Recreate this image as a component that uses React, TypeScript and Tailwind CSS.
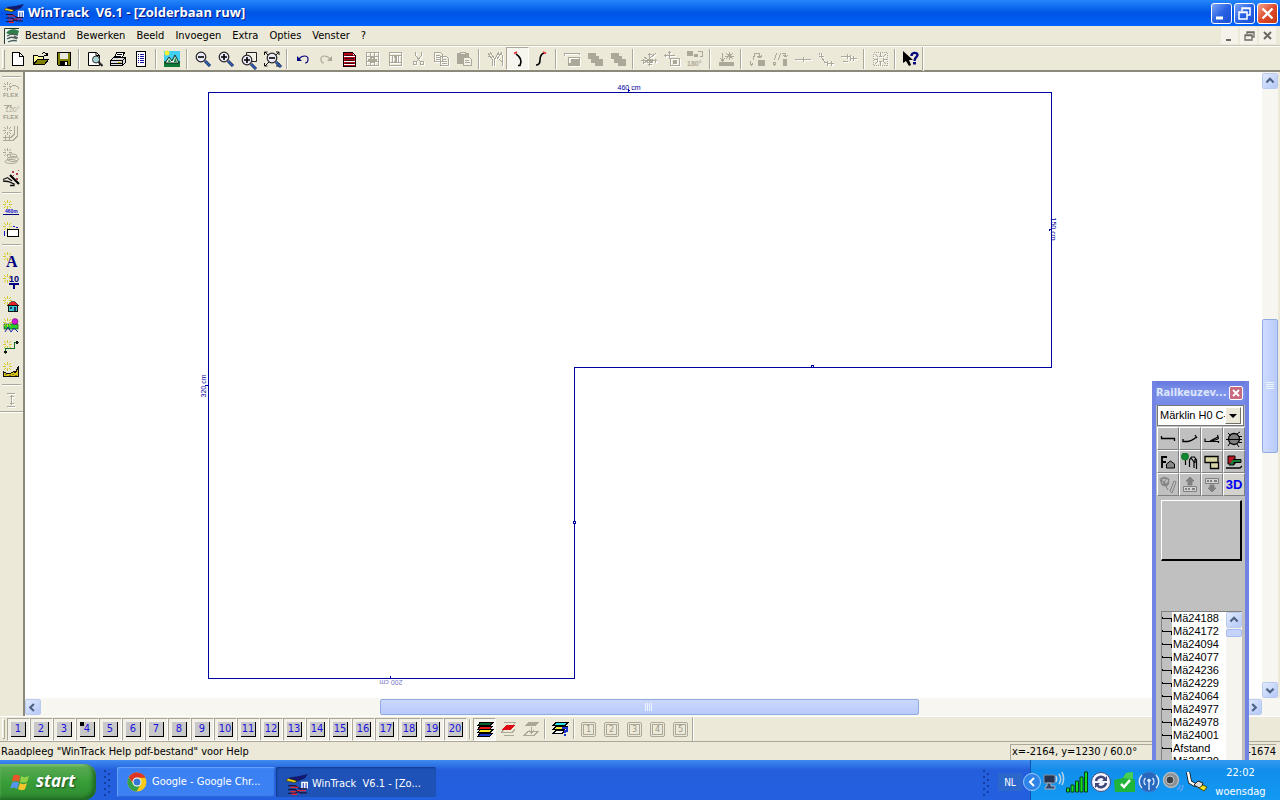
import React from "react";
import type { ReactNode } from "react";

const GRAY = "#aca899";

function Pic({ children, smooth = false }: { children: ReactNode; smooth?: boolean }) {
  return (
    <svg width="16" height="16" viewBox="0 0 16 16" fill="none" className="overflow-visible" shapeRendering={smooth ? "auto" : "crispEdges"} aria-hidden="true">
      {children}
    </svg>
  );
}

function Shade({ children }: { children: ReactNode }) {
  return (
    <Pic>
      <g stroke="#fff" fill="none" transform="translate(1 1)">{children}</g>
      <g stroke={GRAY} fill="none">{children}</g>
    </Pic>
  );
}

function Lens({ x = 6, y = 6, sign }: { x?: number; y?: number; sign: string }) {
  return (
    <>
      <path d={`M${x + 4} ${y + 4}l5 5`} stroke="#10204c" strokeWidth="3" />
      <path d={`M${x + 4} ${y + 4}l5 5`} stroke="#316ac5" strokeWidth="1.5" />
      <circle cx={x} cy={y} r="4.8" fill="#ece9f8" stroke="#222" strokeWidth="1.2" />
      <path d={sign} stroke="#000" strokeWidth="1.6" />
    </>
  );
}

const Spark = ({ c = "#d2ca30" }: { c?: string }) => (
  <path d="M4.5 0v3M4.5 6v3M0 4.5h3M6 4.500h3M1 1l2 2M6 6l2 2M8 1L6 3M3 6L1 8" stroke={c} strokeWidth="1" />
);

function WinTrackIcon({ size = 16 }: { size?: number }) {
  return (
    <svg width={size} height={size} viewBox="0 0 20 20" className="shrink-0" aria-hidden="true">
      <path d="M3 4l8-1 9-2-3 4-8 3.500-4-1z" fill="#111a70" />
      <path d="M0 7l2-2 8 2-2 1.800z" fill="#f3d40c" stroke="#111" strokeWidth=".5" />
      <path d="M14.500 14V8.500h5V14M17 14V8.500" stroke="#fff" strokeWidth="1.300" fill="#4a67c9" />
      <path d="M2 11.500h6l5 3h6M2 15h6l5 3h6M2 18.500h6l5-3" stroke="#1c1138" strokeWidth="1.200" fill="none" />
      <path d="M4 13h7M10 16h8M4 17h5M5 19.300h5" stroke="#e02538" strokeWidth="1.200" />
    </svg>
  );
}

const lensIcon = (sign: string, extra?: ReactNode, x = 6, y = 6) => <Pic smooth>{extra}<Lens x={x} y={y} sign={sign} /></Pic>;

type Tool = { label: string; icon: ReactNode; pressed?: boolean; off?: boolean };

const topGroups: Tool[][] = [
  [
    { label: "Nieuw", icon: <Pic><path d="M2.500 1.500h7l4 4v9h-11z" fill="#fff" stroke="#000" /><path d="M9.500 1.500v4h4" stroke="#000" /></Pic> },
    { label: "Openen", icon: <Pic><path d="M.5 13.500v-9h4l1 1h5v3" fill="#ffffa0" stroke="#000" /><path d="M.5 13.500l4-5h11l-4 5z" fill="#808000" stroke="#000" /><path d="M8.500 3.500c2-3 4-2 5.500 0m0-2v3h-3" stroke="#000" /></Pic> },
    { label: "Opslaan", icon: <Pic><path d="M1.500 1.500h13v13h-12l-1-1z" fill="#808000" stroke="#000" /><path d="M4 2h8v6H4z" fill="#e8e8dc" /><path d="M4 10h8v5H4z" fill="#000" /><path d="M9 11h2v3H9z" fill="#fff" /></Pic> },
  ],
  [
    { label: "Afdrukvoorbeeld", icon: <Pic smooth><path d="M1.500 1.500h8l3 3v10h-11z" fill="#fff" stroke="#000" /><path d="M9 1.500v3h3.500" stroke="#000" /><circle cx="9" cy="8.500" r="3.500" fill="#a9d4d4" stroke="#333" /><path d="M11.500 11l4 4" stroke="#222" strokeWidth="2" /></Pic> },
    { label: "Afdrukken", icon: <Pic><path d="M4.500 7l2-5.500h8L12 7" fill="#fff" stroke="#000" /><path d="M7 3.500h5M6 5.500h5" stroke="#000" /><path d="M.5 9.500l3-3h12v5l-3 3H.5z" fill="#ddd" stroke="#000" /><path d="M.5 9.500h12v5M12.500 9.500l3-3M1 12.500h11" stroke="#000" /><path d="M8 11h3" stroke="#c8b800" /></Pic> },
    { label: "Stuklijst", icon: <Pic><path d="M3.500.5h9v15h-9z" fill="#fff" stroke="#000" /><path d="M5 3.500h1M7 3.500h4M5 5.500h1M7 5.500h4M5 7.500h1M7 7.500h4M5 9.500h1M7 9.500h4M5 11.500h1M7 11.500h4" stroke="#14149c" /></Pic> },
  ],
  [
    { label: "3D-weergave", icon: <Pic smooth><path d="M0 0h16v16H0z" fill="#42cdf3" /><path d="M0 10h16v6H0z" fill="#0d7a38" /><path d="M1 12l4-6 3 4 3-6 4 8z" fill="#e8fff0" stroke="#102c20" /><path d="M4 11l1-3 2 3zM10 11l1-5 2 5z" fill="#168448" /><circle cx="3" cy="2" r="2.500" fill="#f7ef34" /></Pic> },
  ],
  [
    { label: "Uitzoomen", icon: lensIcon("M3 6h6") },
    { label: "Inzoomen", icon: lensIcon("M3 6h6M6 3v6") },
    { label: "Venster zoomen", icon: lensIcon("M3 9h6M6 6v6", <path d="M5.500 1.500h10v9h-10z" stroke="#222" fill="#f4f2e6" />, 6, 9) },
    { label: "Alles tonen", icon: lensIcon("M5 7h6", <path d="M.5 4V1h3M12 1h3v3M.5 12v3h3M15 12v3h-3M1 1l4 4M15 1l-4 4M1 15l4-4" stroke="#111" />, 8, 7) },
  ],
  [
    { label: "Ongedaan maken", icon: <Pic smooth><path d="M4 8C7 4 13 4 13 8c0 2-1 4-3 4" stroke="#080880" strokeWidth="1.200" /><path d="M2 5v5h5z" fill="#080880" /></Pic> },
    { label: "Opnieuw", off: true, icon: <Pic smooth><path d="M12 8C9 4 3 4 3 8c0 2 1 4 3 4" stroke={GRAY} strokeWidth="1.200" /><path d="M14 5v5H9z" fill={GRAY} /></Pic> },
    { label: "Eigenschappen", icon: <Pic><path d="M2 1h10l3 3v12H2z" fill="#b80818" /><path d="M12 1l3 3h-3z" fill="#fff" /><path d="M3 5.500h11M3 10.500h11M3 13.500h11" stroke="#fff" /><path d="M4 4h8M4 7.500h9M4 9.500h9M4 12.500h9" stroke="#301018" /><path d="M2.500 1.500h9l3 3v11h-12z" stroke="#160008" /></Pic> },
    { label: "Blok", off: true, icon: <Shade><path d="M2.500 1.500h12v13h-12zM2.500 5.500h12M2.500 10.500h12M6.500 1v14M10.500 1v14" /><path d="M4 8.500h9M7 6h3v5H7z" strokeWidth="2" /></Shade> },
    { label: "Kolom", off: true, icon: <Shade><path d="M2.500 1.500h12v13h-12zM2 4.500h12M2 11.500h12M5.500 4v8M11.500 4v8" /><path d="M7 5.500h3M8.500 5v6M7 10.500h3" strokeWidth="2" /></Shade> },
    { label: "Knippen", off: true, icon: <Shade><path d="M5.500 1v3l5 7M11.500 1v3l-5 7M3.500 10.500h3v3h-3zM10.500 10.500h3v3h-3z" /></Shade> },
    { label: "Kopiëren", off: true, icon: <Shade><path d="M1.500 1.500h6l2 2v7h-8zM7.500 5.500h6l2 2v7h-8zM3 4.500h4M3 6.500h4M3 8.500h4M9 8.500h4M9 10.500h5M9 12.500h5" /></Shade> },
    { label: "Plakken", off: true, icon: <Pic><path d="M1 2h12v11H1z" fill={GRAY} /><path d="M4.500 3.500h5v-2h-5z" fill="#eee" stroke={GRAY} /><path d="M7.500 6.500h6l2 2v6h-8z" fill="#f4f2e8" stroke={GRAY} /><path d="M9 9.500h4M9 11.500h5" stroke={GRAY} /></Pic> },
  ],
  [
    { label: "Verbinden", off: true, icon: <Shade><path d="M1 2l4 6v7M3 1l4 6v8M15 4v11M12 1L7 9M15 1l-5 7M1 5h3M10 3h5M12 8l3 3" /></Shade> },
    { label: "Bocht links", pressed: true, icon: <Pic smooth><path d="M6 3c3 2 5 5 5 8l-1 3.500H8" stroke="#000" strokeWidth="1.600" /><path d="M4 2.500l3-1.500" stroke="#e32936" strokeWidth="1.800" /></Pic> },
    { label: "Bocht rechts", icon: <Pic smooth><path d="M11 2C8 3 7 6 7 9s-1 5-4 5" stroke="#000" strokeWidth="1.600" /><path d="M10 1l3 1.500" stroke="#e32936" strokeWidth="1.800" /></Pic> },
  ],
  [
    { label: "Trein", off: true, icon: <Shade><path d="M.5 5V2.500h15v1M4.500 6.500h11v8h-11z" /><path d="M5 13h10M8 9h2v2H8zM12 9h2v2h-2z" strokeWidth="2" /></Shade> },
    { label: "Naar voren", off: true, icon: <Pic><path d="M1 2h8v3h3v3h4v7H8v-3H4V8H1z" fill={GRAY} /></Pic> },
    { label: "Naar achteren", off: true, icon: <Pic><path d="M1 2h8v3h3v3h4v7H8v-3H4V8H1z" fill={GRAY} /></Pic> },
  ],
  [
    { label: "Verplaatsen", off: true, icon: <Shade><path d="M0 9.500h16M8.500 2v13M6.500 3.500h4M6.500 13.500h4M2 7.500v4M14 7.500v4M2 13L15 2M3 6l9 6" /><path d="M6 8h5v3H6z" /></Shade> },
    { label: "Groep", off: true, icon: <Shade><path d="M0 4.500h11M5.500 0v8M1.500 3v3M4 1.500h3M6.500 7.500h9v7h-9z" /><path d="M9 10h4M9 12h4" strokeWidth="2" /></Shade> },
    { label: "180 graden draaien", off: true, icon: <Pic><path d="M0 0h6v5H0zM7 3h4v3H7z" fill={GRAY} /><path d="M10.500.5h5v5h-3" stroke={GRAY} /><text x="0" y="15" fontSize="7" fontFamily="Liberation Sans, sans-serif" fontWeight="700" fill={GRAY}>180°</text></Pic> },
  ],
  [
    { label: "Hoogte", off: true, icon: <Pic><path d="M1 11h15v4H1z" fill={GRAY} /><path d="M4.500 2v8M2 7l2.500 3L7 7M11.500 1v8M7 5h9M8 2l7 6M15 2L8 8" stroke={GRAY} /></Pic> },
  ],
  [
    { label: "Helling", off: true, icon: <Pic><path d="M2 15l2-3M4 9l2-7M5.500 2.500h5v3M8 5l3 2 2-3M1 14v-4" stroke={GRAY} /><path d="M9 9h7v6H9z" fill={GRAY} /></Pic> },
    { label: "Helling delen", off: true, icon: <Pic><path d="M2 15l2-3M2 9l3-7M6 9l3-7M9.500 2.500h4v3M11 4l3 2 2-2M1 14v-3h3" stroke={GRAY} /><path d="M11 8h4v7h-4z" fill={GRAY} /></Pic> },
    { label: "Splitsen", off: true, icon: <Shade><path d="M0 8.500h16M8.500 6v5" /></Shade> },
    { label: "Verbinding", off: true, icon: <Shade><path d="M3.500 2v4l3 5 4 1.500h5M1 5.500h5M1.500 2v2M9.500 10v5M13.500 10v5" /></Shade> },
    { label: "Sluiten", off: true, icon: <Shade><path d="M0 5.500h9M6.500 3v5M9.500 4v6M9 7.500h7M2 10.500h5M12.500 5v5" /></Shade> },
  ],
  [
    { label: "Centreren", off: true, icon: <Shade><path d="M1.500 1.500h14v13h-14z" strokeDasharray="1 1" /><path d="M8.500 2v4M8.500 10v4M2 8.500h4M11 8.500h4M7 5.500h3M7 10.500h3M5.500 7v3M11.500 7v3M3 3l3 3M14 3l-3 3M3 13l3-3M14 13l-3-3" /></Shade> },
  ],
  [
    { label: "Help", icon: <Pic smooth><path d="M0 0v12l3-2 3 5 2-1-2-5h4z" fill="#000" /><path d="M8.500 5c0-4 6-4 6-1 0 2-3 2-3 6" stroke="#080880" strokeWidth="2.400" /><path d="M10 11h3v2.500h-3z" fill="#080880" /></Pic> },
  ],
];

const sideGroups: Tool[][] = [
  [
    { label: "Flexrail", off: true, icon: <Pic><Spark c={GRAY} /><path d="M7 6c3-4 5-3 8-1v2" stroke={GRAY} /><text x="0" y="15" fontSize="6" fontFamily="Liberation Sans, sans-serif" fontWeight="700" fill="#a09d8e">FLEX</text></Pic> },
    { label: "Flexrail 120 graden", off: true, icon: <Pic><path d="M1 1.500h5L3 5M9 1.500H7v2h2" stroke={GRAY} /><text x="2" y="8" fontSize="7" fontFamily="Liberation Sans, sans-serif" fill={GRAY}>120°</text><text x="0" y="15" fontSize="6" fontFamily="Liberation Sans, sans-serif" fontWeight="700" fill="#a09d8e">FLEX</text></Pic> },
    { label: "Parallelspoor", off: true, icon: <Pic><Spark c={GRAY} /><path d="M11.500 0v8l-3 3H0M14.500 0v10l-4 4H0M2.500 9v6M6.500 9v6" stroke={GRAY} /></Pic> },
    { label: "Spiraal", off: true, icon: <Pic smooth><Spark c={GRAY} /><ellipse cx="9" cy="8" rx="5" ry="2" stroke={GRAY} /><ellipse cx="10" cy="11" rx="5.500" ry="2.500" stroke={GRAY} /><ellipse cx="8" cy="13.500" rx="6" ry="2" stroke={GRAY} /></Pic> },
    { label: "Wizard", icon: <Pic smooth><path d="M7 5l9 9" stroke="#000" strokeWidth="2.200" /><path d="M0 9.500l5-2M0 11l5 .5 6 2.500v1.500H7M5 8l4 3" stroke="#111" strokeWidth="1.300" /><path d="M9 1h2v2H9zM13 3h2v2h-2zM13 8h2v2h-2zM10 5h1v1h-1zM15 0h1v1h-1z" fill="#b0405a" /></Pic> },
  ],
  [
    { label: "Maatlijn", icon: <Pic><Spark /><path d="M0 14.500h16" stroke="#000080" /><text x="2" y="13" fontSize="5" fontFamily="Liberation Sans, sans-serif" fontWeight="700" fill="#1010d0">460m</text></Pic> },
    { label: "Rechthoek", icon: <Pic><Spark /><path d="M4.500 7.500h11v7h-11z" fill="#fff" stroke="#000" /><path d="M1.500 9v5M10 4.500h2M13 5.500h2" stroke="#1010d0" /></Pic> },
  ],
  [
    { label: "Tekst", icon: <Pic><Spark /><text x="3" y="15" fontSize="16" fontFamily="Liberation Serif, serif" fontWeight="700" fill="#000080">A</text></Pic> },
    { label: "Hoogtepunt", icon: <Pic><Spark /><text x="6" y="8" fontSize="9" fontFamily="Liberation Sans, sans-serif" fontWeight="700" fill="#000080">10</text><path d="M6 10h10M11 10v5" stroke="#000080" strokeWidth="2" /></Pic> },
    { label: "Huis", icon: <Pic><Spark /><path d="M4 9.500l5-4h3l4 4z" fill="#e82128" stroke="#222" strokeWidth=".7" /><path d="M5.500 9.500h9v6h-9z" fill="#35c9cd" stroke="#111" /><path d="M7 11h2v2H7zM11 11h2v4h-2z" fill="#17366b" /></Pic> },
    { label: "Landschap", icon: <Pic smooth><path d="M1 6h14v5H1z" fill="#2bcc29" stroke="#073b0a" strokeWidth=".6" /><Spark /><circle cx="12" cy="3.500" r="3" fill="#d214d6" stroke="#551255" strokeWidth=".5" /><path d="M2 14l3-5 3 5 3-4 4 4" stroke="#1724aa" /></Pic> },
    { label: "Profiel", icon: <Pic><Spark /><path d="M2.500 14V8.500h9v-6h4" stroke="#107028" /><path d="M1 11h3v2H1zM13 1h2v3h-2z" fill="#111" /></Pic> },
    { label: "Terrein", icon: <Pic><Spark /><path d="M.5 14.500v-5l3 2h4l3-2 2 1 3-6v10z" fill="#ddc319" stroke="#111" /><path d="M2 12.500h2M6 13.500h2M9 12.500h2M12 13.500h2" stroke="#7d7811" /></Pic> },
  ],
  [{ label: "Hoogte", off: true, icon: <Shade><path d="M4 1.500h8M4 14.500h8M8.500 3v10M6.500 4.500h4M6.500 11.500h4" /></Shade> }],
];

const layerGroups: Tool[][] = [
  [
    { label: "Alle lagen", pressed: true, icon: <Pic><path d="M1 15l2-3h13l-3 3z" fill="#2035c8" stroke="#000" /><path d="M1 11.500l2-3h13l-3 3z" fill="#f8e928" stroke="#000" /><path d="M1 8l2-3h13l-3 3z" fill="#e91818" stroke="#000" /><path d="M1 4.500l2-3h13l-3 3z" fill="#07602c" stroke="#000" /></Pic> },
    { label: "Actieve laag", icon: <Pic><path d="M4 1.500h11l-2 3M1 11.500l3-3M1 11.500h11l3-3M4 14.500h10" stroke={GRAY} /><path d="M1 9l5-5h9l-5 5z" fill="#e00b12" /></Pic> },
    { label: "Laag omlaag", off: true, icon: <Pic><path d="M1 14.500l4-4h10l-4 4z" stroke={GRAY} /><path d="M1 5l4-4h11l-4 4z" fill={GRAY} /><path d="M8.500 6v6M6 9l2.500 3L11 9" stroke={GRAY} /></Pic> },
  ],
  [{ label: "Lagen instellen", icon: <Pic><path d="M1 12.500l3-3h9l-3 3z" fill="#fff" stroke="#000" /><path d="M1 8.500l3-3h11l-3 3z" fill="#f8ef36" stroke="#000" /><path d="M1 4.500l3-3h12l-3 3z" fill="#2ae5e5" stroke="#000" /><path d="M10 7h5v3h-2v2M12 14h2" stroke="#1531ce" strokeWidth="2" /></Pic> }],
];

function ToolButton({ tool, small = false }: { tool: Tool; small?: boolean }) {
  const look = tool.pressed ? "border-[#aca899] border-r-white border-b-white bg-[#f6f5ee]" : "border-transparent";
  return (
    <button type="button" aria-label={tool.label} disabled={tool.off} className={`grid shrink-0 place-items-center border ${small ? "h-[22px] w-[22px]" : "h-[23px] w-[23px]"} ${look}`}>
      {tool.icon}
    </button>
  );
}

const Divider = () => <span className="mx-[3px] h-5 w-[2px] shrink-0 border-l border-r border-l-[#aca899] border-r-white" />;
const Grip = () => <span className="mr-px ml-[2px] h-5 w-[3px] shrink-0 border border-white border-r-[#aca899] border-b-[#aca899]" />;

function Chevron({ dir }: { dir: "up" | "down" | "left" | "right" }) {
  const d = { up: "M1 6l4-4 4 4", down: "M1 3l4 4 4-4", left: "M6 1L2 5l4 4", right: "M3 1l4 4-4 4" }[dir];
  return <svg width="10" height="9" viewBox="0 0 10 10" aria-hidden="true"><path d={d} fill="none" stroke="#4d6185" strokeWidth="2.400" /></svg>;
}

function ScrollButton({ dir }: { dir: "up" | "down" | "left" | "right" }) {
  return (
    <button type="button" aria-label={`Schuif ${dir}`} className="grid h-4 w-4 shrink-0 place-items-center rounded-xs border border-white bg-linear-to-br from-[#e1eafe] to-[#b4c8f6] outline outline-[#b9cbef] -outline-offset-1">
      <Chevron dir={dir} />
    </button>
  );
}

function TitleButton({ label, children, red = false }: { label: string; children: ReactNode; red?: boolean }) {
  return (
    <button type="button" aria-label={label} className={`grid h-[21px] w-[21px] place-items-center rounded-[3px] border border-white bg-linear-to-br ${red ? "from-[#f0a08a] via-[#e0492a] to-[#c23a16]" : "from-[#7da5f5] via-[#2a62e4] to-[#1c4fd6]"}`}>
      <svg width="15" height="15" viewBox="0 0 15 15" fill="none" stroke="#fff" aria-hidden="true">{children}</svg>
    </button>
  );
}

function Plan() {
  return (
    <svg width="1237" height="626" viewBox="25 72 1237 626" className="block" role="img" aria-label="Plattegrond">
      <g shapeRendering="crispEdges" stroke="#0000a0" fill="none">
        <path d="M208.500 92.500H1051.500V367.500H574.500V678.500H208.500Z" />
        <path d="M811.500 365.500h2v2h-2zM573.500 521.500h2v2h-2z" fill="#fff" />
        <path d="M628 90.500h2M628.500 89v3M1049.500 229v2M1049 229.500h3M205 385.500h3M390.500 676v3" />
      </g>
      <g fontSize="7" fontFamily="Liberation Sans, sans-serif" fill="#0000a0" textAnchor="middle">
        <text x="629" y="90">460 cm</text>
        <text transform="translate(1051 229) rotate(90)">150 cm</text>
        <text transform="translate(206 386) rotate(-90)">320 cm</text>
        <text transform="translate(391 680) rotate(180)" fill="#7777c4">200 cm</text>
      </g>
    </svg>
  );
}

const P = ({ children }: { children: ReactNode }) => <svg width="18" height="18" viewBox="0 0 18 18" fill="none" stroke="#000" aria-hidden="true">{children}</svg>;

const railTools: { label: string; icon: ReactNode }[] = [
  { label: "Rechte rail", icon: <P><path d="M2.500 6v2.500h13V11" strokeWidth="1.300" /></P> },
  { label: "Gebogen rail", icon: <P><path d="M2 9v2.500h5c4-1 5-2 8-4M14 5l2 3" strokeWidth="1.300" /></P> },
  { label: "Wissel", icon: <P><path d="M2 8.500v3h13.500V13M7 11l8-4M9 11l6-2M14.500 5l1 4" strokeWidth="1.200" /></P> },
  { label: "Draaischijf", icon: <P><circle cx="9" cy="9" r="5.500" fill="#808080" strokeWidth="1.300" /><path d="M1 9.500h16M3 3l3 3M12 4l3-2M14 6.500h3M14 12.500h3M12 14l2 3M5 13l-2 3" /></P> },
  { label: "Gebouwen", icon: <P><path d="M3 15V4h5M3 9h4" strokeWidth="1.800" /><path d="M7.500 15v-4l4-3 4 3v4z" fill="#888" /></P> },
  { label: "Landschap", icon: <P><path d="M4.500 7v5M8.500 14V7l2-3h3l2 3v9M10 5l3 4v6M14 6v4" strokeWidth="1.200" /><circle cx="4" cy="3.500" r="3.500" fill="#138631" stroke="#0a7425" /></P> },
  { label: "Vlakken", icon: <P><path d="M2 3.500h13v6H2zM7.500 9.500h8v6h-8z" fill="#d9d5a5" strokeWidth="1.300" /></P> },
  { label: "Treinen", icon: <P><path d="M3 3h7v8H3z" fill="#b51622" /><path d="M8 6.500h8v3H9v2.500H4" fill="#177b35" /><path d="M1 15h14l2-2" strokeWidth="1.300" /></P> },
  { label: "Bewerken", icon: <P><g stroke="#808080"><path d="M1 3l4-2 5 2-2 6-5-1zM4 5l5 9M2 4l6 4M7 3L4 9M15 5l-4 10 2 2 4-11z" /><circle cx="6" cy="6" r="4" /></g></P> },
  { label: "Omhoog", icon: <P><g stroke="#808080"><path d="M9 1l4 4h-2v4H7V5H5z" fill="#808080" /><path d="M2.500 10.500h13v5h-13z" fill="#d2d2d2" /><path d="M4 13h2M7 13h2M11 13h3" strokeWidth="2" /></g></P> },
  { label: "Omlaag", icon: <P><g stroke="#808080"><path d="M2.500 2.500h13v5h-13z" fill="#d2d2d2" /><path d="M9 16l4-4h-2V9H7v3H5z" fill="#808080" /><path d="M4 5h2M7 5h2M11 5h3" strokeWidth="2" /></g></P> },
];

const rails = ["Mä24188", "Mä24172", "Mä24094", "Mä24077", "Mä24236", "Mä24229", "Mä24064", "Mä24977", "Mä24978", "Mä24001", "Afstand", "Mä24530"];

function RailPanel() {
  return (
    <section className="absolute top-[381px] right-[31px] bottom-10 flex w-[97px] flex-col overflow-hidden border-x-4 border-[#7284e3] bg-[#c0c0c0] pl-px font-['Liberation_Sans',sans-serif] text-[11px]">
      <header className="-mr-1 -ml-[5px] flex h-6 shrink-0 items-center justify-between bg-linear-to-b from-[#6678dc] via-[#8095ec] to-[#7488e6] pr-1.5 pl-1">
        <h2 className="font-['DejaVu_Sans_Condensed','DejaVu_Sans',sans-serif] text-[11px] font-bold text-[#dce5fb]">Railkeuzev...</h2>
        <button type="button" aria-label="Sluiten" className="grid h-3.5 w-3.5 place-items-center rounded-xs border border-white bg-[#c86b80]">
          <svg width="8" height="8" viewBox="0 0 8 8" aria-hidden="true"><path d="M1 1l6 6M7 1L1 7" stroke="#fff" strokeWidth="1.800" /></svg>
        </button>
      </header>
      <div className="relative h-[21px] shrink-0">
        <select aria-label="Railsysteem" className="h-full w-[87px] appearance-none border border-[#777] bg-white pr-4 pl-0.5 text-[11px] text-black">
          <option>Märklin H0 C-</option>
        </select>
        <span className="pointer-events-none absolute top-0.5 right-1 grid h-[17px] w-4 place-items-center border border-white border-r-[#716f64] border-b-[#716f64] bg-[#ece9d8]">
          <svg width="8" height="4" viewBox="0 0 8 4" aria-hidden="true"><path d="M0 0h8L4 4z" /></svg>
        </span>
      </div>
      <div className="grid w-[88px] shrink-0 grid-cols-4 pt-px">
        {railTools.map((t) => (
          <button key={t.label} type="button" aria-label={t.label} className="grid h-[23px] place-items-center border border-white border-r-[#808080] border-b-[#808080]">{t.icon}</button>
        ))}
        <button type="button" className="grid h-[23px] place-items-center border border-white border-r-[#808080] border-b-[#808080] bg-[#d4d2cc] font-['Liberation_Sans',sans-serif] text-[13px] font-bold text-[#0000f0]">3D</button>
      </div>
      <div className="mt-1 ml-[4px] h-[61px] w-[81px] shrink-0 border-t border-r-2 border-b-2 border-l border-t-white border-r-black border-b-black border-l-white" />
      <div className="mt-[50px] ml-1 flex min-h-0 w-[81px] flex-1 border-t border-l border-[#808080] bg-white">
        <ul className="min-w-0 flex-1">
          {rails.map((r) => (
            <li key={r} className="flex h-[13px] items-center gap-px leading-[13px]">
              <svg width="10" height="13" viewBox="0 0 10 13" className="shrink-0 bg-[#c0c0c0]" shapeRendering="crispEdges" aria-hidden="true"><path d="M.5 5v1.500h9V10" fill="none" stroke="#000" /></svg>
              <span className="whitespace-nowrap">{r}</span>
            </li>
          ))}
        </ul>
        <div className="flex w-4 shrink-0 flex-col bg-[#f5f4ee]">
          <ScrollButton dir="up" />
          <span className="mt-px h-2 w-4 rounded-xs border border-[#a6bcf0] bg-[#c5d3fb]" />
        </div>
      </div>
    </section>
  );
}

function ChromeIcon() {
  return (
    <svg width="20" height="20" viewBox="0 0 20 20" className="shrink-0" aria-hidden="true">
      <circle cx="10" cy="10" r="9.500" fill="#f6c91a" />
      <path d="M1.800 5.200A9.500 9.500 0 0 1 18.500 5.700H10a4.300 4.300 0 0 0-4.200 5.300z" fill="#dc3526" />
      <path d="M1.800 5.200A9.500 9.500 0 0 0 9.500 19.500l4.200-7.200a4.400 4.400 0 0 1-7.500 0z" fill="#35a04a" />
      <circle cx="10" cy="10" r="4.500" fill="#fff" /><circle cx="10" cy="10" r="3.500" fill="#3578d4" />
    </svg>
  );
}

const T = ({ children }: { children: ReactNode }) => <svg width="24" height="24" viewBox="0 0 24 24" fill="none" className="shrink-0" aria-hidden="true">{children}</svg>;

function TrayIcons() {
  return (
    <div className="flex items-center">
      <T><path d="M3 5h11v8H3z" fill="#27334e" stroke="#8292ae" /><path d="M6 13h4v3h4v3H4v-2l2-1z" fill="#36466b" stroke="#a6b7c8" /><path d="M15 6c1 2 1 4 0 6M18 4c2 3 2 7 0 10M21 2c2 4 2 9 0 13" stroke="#b8d2e7" strokeWidth="1.500" /></T>
      <T><path d="M1.500 18h3v4h-3zM6 15h3v7H6zM10.500 11h3v11h-3zM15 7h3v15h-3zM19.500 2h3v20h-3z" fill="#14e11c" stroke="#073d19" /></T>
      <T><circle cx="12" cy="12" r="9.500" fill="#f2f4ff" stroke="#454d7b" /><path d="M7 11a5 5 0 0 1 9-2M17 13a5 5 0 0 1-9 2" stroke="#404776" strokeWidth="2.500" /><path d="M18 6v5h-5zM6 18v-5h5z" fill="#404776" /></T>
      <T><path d="M1 10l9-2 3-5 7-1v7l2 1v12H2z" fill="#21b43b" /><path d="M10 8l3-5 7-1v7z" fill="#48cf54" /><path d="M8 14l3 3 6-7" stroke="#fff" strokeWidth="2.500" /></T>
      <T><circle cx="12" cy="12" r="10" fill="#2868bc" stroke="#3b79d0" /><path d="M12 11v9M8.500 8a5 5 0 0 0 0 7M15.500 8a5 5 0 0 1 0 7M5 5a9 9 0 0 0 0 13M19 5a9 9 0 0 1 0 13" stroke="#dcecff" strokeWidth="1.400" /><circle cx="12" cy="10.500" r="1.800" fill="#dcecff" /></T>
      <T><circle cx="10" cy="10" r="7.500" fill="#8a9094" stroke="#b5babd" strokeWidth="1.500" /><circle cx="9" cy="10" r="4" fill="#3b4248" stroke="#c3c8ca" /><path d="M16 19c2 0 3-2 3-4M19 21c2-1 3-3 3-6" stroke="#5ba4fb" strokeWidth="1.500" /></T>
      <T><path d="M3 2l2 10 5 3h6" stroke="#111" strokeWidth="4" /><path d="M3 2l2 10 5 3h6" stroke="#fff" strokeWidth="2.400" /><path d="M9 15l4-4 5 2-2 6z" fill="#ddd" stroke="#222" /><path d="M14 18l4-3 4 2-3 4z" fill="#f2e321" stroke="#514a05" /></T>
    </div>
  );
}

const Dots = () => (
  <svg width="8" height="28" viewBox="0 0 8 28" aria-hidden="true"><path d="M2 2v26M6 5v22" stroke="#153f9e" strokeWidth="2" strokeDasharray="2 4" /></svg>
);

export default function App() {
  return (
    <div className="relative flex h-screen min-h-[600px] flex-col overflow-hidden bg-[#ece9d8] font-['DejaVu_Sans_Condensed','DejaVu_Sans',sans-serif] text-[11px] text-black">
      <header className="flex h-[26px] shrink-0 items-center bg-linear-to-b from-[#2585fa] via-[#0054e6] to-[#0064fc] px-1">
        <WinTrackIcon size={20} />
        <h1 className="ml-1 flex-1 font-['Open_Sans',sans-serif] text-[13px] font-bold whitespace-pre text-white [text-shadow:1px_1px_#0a1883]">WinTrack  V6.1 - [Zolderbaan ruw]</h1>
        <div className="-mr-0.5 flex gap-0.5">
          <TitleButton label="Minimaliseren"><path d="M2 12h7" strokeWidth="3" /></TitleButton>
          <TitleButton label="Verkleinen"><path d="M5 5V2h8v7h-3M2 6h8v7H2zM5 2.500h8M2 6.500h8" strokeWidth="1.500" /></TitleButton>
          <TitleButton label="Sluiten" red><path d="M2.500 2.500l10 10M12.500 2.500l-10 10" strokeWidth="2.400" /></TitleButton>
        </div>
      </header>

      <nav className="flex h-5 shrink-0 items-center border-b border-[#c9c5b2] pr-1 pl-1">
        <svg width="16" height="16" viewBox="0 0 16 16" aria-hidden="true"><path d="M0 0h16v16H0z" fill="#eef3ee" /><path d="M2 5c3-4 8-5 13-2l-1 3-7 1z" fill="#2d7e4b" /><path d="M3 8l5-2 6 1M3 11c4-3 7-2 10 0M4 14c4-2 6-2 9-1M10 8l4 2" stroke="#4c5a54" strokeWidth="1.300" fill="none" /><path d="M.5 16V.5H15" fill="none" stroke="#243a31" /></svg>
        <div className="flex flex-1 gap-[11px] pt-px pl-[5px]">
          {["Bestand", "Bewerken", "Beeld", "Invoegen", "Extra", "Opties", "Venster", "?"].map((m) => <button key={m} type="button">{m}</button>)}
        </div>
        <div className="flex gap-0.5 text-[#6c6a60]">
          {["M2 10h5", "M4 4V2h7v5H9M2 5h7v5H2zM4 2.500h7M2 5.500h7", "M2 2l7 7M9 2L2 9"].map((d, i) => (
            <button key={d} type="button" aria-label={["Venster minimaliseren", "Venster herstellen", "Venster sluiten"][i]} className="grid h-[17px] w-[17px] place-items-center bg-[#f4f2e9]">
              <svg width="12" height="12" viewBox="0 0 12 12" aria-hidden="true"><path d={d} fill="none" stroke="currentColor" strokeWidth={i === 1 ? 1.3 : 2} /></svg>
            </button>
          ))}
        </div>
      </nav>

      <div className="flex h-[26px] shrink-0 items-center border-t border-b-2 border-t-white border-b-[#8b897b]" role="toolbar">
        <Grip />
        {topGroups.map((g, i) => (
          <React.Fragment key={i}>
            {i > 0 && <Divider />}
            {g.map((t) => <ToolButton key={t.label} tool={t} />)}
          </React.Fragment>
        ))}
        <span className="h-6 w-[2px] border-l border-r border-l-[#aca899] border-r-white" />
      </div>

      <div className="flex min-h-0 flex-1">
        <aside className="flex w-[25px] shrink-0 flex-col border-r-2 border-[#8b897b]" role="toolbar">
          <span className="mx-0.5 mt-1 mb-[1px] h-[2px] shrink-0 border-t border-b border-t-[#aca899] border-b-white" />
          {sideGroups.map((g, i) => (
            <React.Fragment key={i}>
              {i > 0 && <span className="mx-0.5 my-[3px] h-[2px] shrink-0 border-t border-b border-t-[#aca899] border-b-white" />}
              {g.map((t) => <ToolButton key={t.label} tool={t} small />)}
            </React.Fragment>
          ))}
          <span className="h-[2px] shrink-0 border-t border-b border-t-[#aca899] border-b-white" />
        </aside>
        <main className="flex min-w-0 flex-1 flex-col">
          <div className="flex min-h-0 flex-1">
            <div className="min-w-0 flex-1 overflow-hidden bg-white"><Plan /></div>
            <div className="mr-0.5 flex w-4 shrink-0 flex-col bg-[#f7f6f1] pt-px">
              <ScrollButton dir="up" />
              <span className="grow-[231] basis-0" />
              <button type="button" aria-label="Verticaal schuiven" className="grid grow-[133] basis-0 place-items-center rounded-xs border border-[#8fabdf] bg-linear-to-r from-[#cfdcfe] to-[#b9cafa]">
                <svg width="8" height="8" aria-hidden="true"><path d="M0 .5h8M0 2.500h8M0 4.500h8M0 6.500h8" stroke="#eef4fe" /></svg>
              </button>
              <span className="grow-[230] basis-0" />
              <ScrollButton dir="down" />
            </div>
          </div>
          <div className="flex h-[18px] shrink-0 items-center bg-[#f7f6f1] pr-[18px]">
            <ScrollButton dir="left" />
            <span className="grow-[339] basis-0" />
            <button type="button" aria-label="Horizontaal schuiven" className="grid h-4 grow-[538] basis-0 place-items-center rounded-xs border border-[#8fabdf] bg-linear-to-b from-[#cad8fe] to-[#b9cafa]">
              <svg width="8" height="8" aria-hidden="true"><path d="M.5 0v8M2.500 0v8M4.500 0v8M6.500 0v8" stroke="#eef4fe" /></svg>
            </button>
            <span className="grow-[327] basis-0" />
            <ScrollButton dir="right" />
          </div>
        </main>
      </div>

      <div className="flex h-[26px] shrink-0 items-center border-t border-b border-t-white border-b-[#aca899]" role="toolbar">
        <Grip />
        <span className="w-px" />
        {Array.from({ length: 20 }, (_, i) => i + 1).map((n) => (
          <button key={n} type="button" className="relative grid h-[23px] w-[23px] shrink-0 place-items-center border border-[#aca899] border-r-white border-b-white bg-[#f1efe6]">
            <span className="grid h-[15px] w-[15px] place-items-center border-r border-b border-black bg-[#c8c8c8] text-[11px] leading-[14px] text-[#1b12e0]">{n}</span>
            {n === 4 && <span className="absolute top-[3px] left-[3px] h-1 w-1 bg-black" />}
          </button>
        ))}
        {layerGroups.map((g, i) => (
          <React.Fragment key={i}>
            <span className="mx-0.5 h-5 w-[2px] border-l border-r border-l-[#aca899] border-r-white" />
            {g.map((t) => <ToolButton key={t.label} tool={t} />)}
          </React.Fragment>
        ))}
        <span className="mx-0.5 h-5 w-[2px] border-l border-r border-l-[#aca899] border-r-white" />
        {[1, 2, 3, 4, 5].map((n) => (
          <button key={n} type="button" disabled className="grid h-[23px] w-[23px] place-items-center">
            <span className="grid h-[15px] w-[15px] place-items-center rounded-xs border border-[#aca899]">
              <span className="grid h-[11px] w-[11px] place-items-center border border-[#aca899] text-[9px] leading-none text-[#9b988a]">{n}</span>
            </span>
          </button>
        ))}
        <span className="h-6 w-[2px] border-l border-r border-l-[#aca899] border-r-white" />
      </div>

      <footer className="flex h-[18px] shrink-0 items-center justify-between pt-0.5 pr-1 pl-px">
        <p>Raadpleeg "WinTrack Help pdf-bestand" voor Help</p>
        <div className="flex h-4 w-[266px] items-center justify-between border-t border-l border-[#aca899] pl-px">
          <span>x=-2164, y=1230 / 60.0°</span>
          <span>-1674</span>
        </div>
      </footer>

      <RailPanel />

      <div className="flex h-10 shrink-0 items-stretch bg-linear-to-b from-[#3f8cf0] via-[#245edc] via-25% to-[#2260e0]">
        <button type="button" className="mt-1 flex w-24 items-center gap-1.5 rounded-r-xl bg-linear-to-b from-[#5eac56] via-[#389e38] to-[#2f8a30] pl-2.5 shadow-[inset_-3px_-2px_4px_#1d6522,inset_0_2px_2px_#83c67c]">
          <svg width="20" height="20" viewBox="0 0 20 20" aria-hidden="true"><path d="M3 4c3-2 5-1 7 0L9 10C7 9 5 8 2 10z" fill="#e8572b" /><path d="M11 4c3 2 5 1 8 0l-2 6c-3 1-5 1-7 0z" fill="#8fd146" /><path d="M2 11c3-2 5-1 7 0l-2 6c-2-1-4-2-7 0z" fill="#5594ec" /><path d="M10 11c3 2 5 1 7 0l-2 6c-2 2-5 1-7 0z" fill="#f5c52b" /></svg>
          <span className="pb-0.5 font-['Open_Sans',sans-serif] text-[17px] font-bold text-white italic [text-shadow:1px_1px_2px_#1b4d1d]">start</span>
        </button>
        <div className="flex w-[21px] items-center justify-center pt-1"><Dots /></div>
        <div className="mt-[7px] mb-[3px] flex gap-px text-white">
          <button type="button" className="flex w-[158px] items-center gap-[5px] rounded-xs bg-[#3c81f3] pl-2.5 shadow-[inset_1px_1px_1px_#69a2fb,inset_-1px_-1px_1px_#2963d2]"><ChromeIcon /><span>Google - Google Chr...</span></button>
          <button type="button" className="flex w-40 items-center gap-1 rounded-xs bg-[#1e52b7] pt-1 pl-2.5 shadow-[inset_1px_1px_2px_#123a88]"><WinTrackIcon size={22} /><span className="whitespace-pre">WinTrack  V6.1 - [Zo...</span></button>
        </div>
        <div className="ml-auto flex items-center gap-2 pt-1 text-white"><Dots /><span className="grid h-[18px] w-6 place-items-center bg-[#2c67cc] text-[10px]">NL</span></div>
        <div className="ml-2 flex w-[250px] items-center border-l border-[#0d50ae] bg-linear-to-b from-[#3398ef] via-[#118eeb] via-25% to-[#1299f2] pt-1 text-white">
          <button type="button" aria-label="Verborgen pictogrammen tonen" className="-ml-2 grid h-[18px] w-[18px] shrink-0 place-items-center rounded-full border border-[#9cc8fa] bg-[#2f82e6]">
            <svg width="10" height="10" viewBox="0 0 10 10" aria-hidden="true"><path d="M7 1L3 5l4 4" fill="none" stroke="#fff" strokeWidth="2" /></svg>
          </button>
          <TrayIcons />
          <div className="flex flex-1 flex-col items-center pr-2 leading-[19px]"><span>22:02</span><span>woensdag</span></div>
        </div>
      </div>
    </div>
  );
}
